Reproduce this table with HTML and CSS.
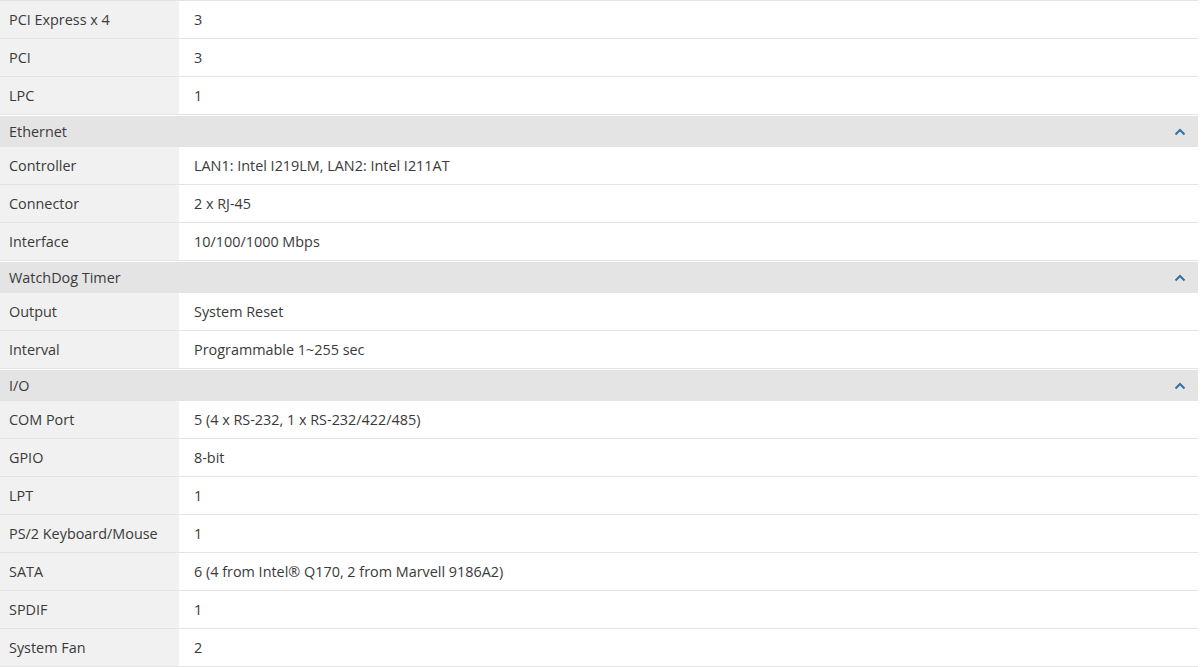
FILE: index.html
```html
<!DOCTYPE html>
<html>
<head>
<meta charset="utf-8">
<link rel="stylesheet" href="styles.css">
</head>
<body>
<div class="spec">
  <div class="row"><div class="label">PCI Express x 4</div><div class="value">3</div></div>
  <div class="row"><div class="label">PCI</div><div class="value">3</div></div>
  <div class="row"><div class="label">LPC</div><div class="value">1</div></div>

  <div class="group">
    <span>Ethernet</span>
    <svg class="chev" width="12" height="8" viewBox="0 0 12 8"><polyline points="1.5,6.5 6,2 10.5,6.5" fill="none" stroke="#3570a3" stroke-width="2"/></svg>
  </div>
  <div class="row"><div class="label">Controller</div><div class="value">LAN1: Intel I219LM, LAN2: Intel I211AT</div></div>
  <div class="row"><div class="label">Connector</div><div class="value">2 x RJ-45</div></div>
  <div class="row"><div class="label">Interface</div><div class="value">10/100/1000 Mbps</div></div>

  <div class="group">
    <span>WatchDog Timer</span>
    <svg class="chev" width="12" height="8" viewBox="0 0 12 8"><polyline points="1.5,6.5 6,2 10.5,6.5" fill="none" stroke="#3570a3" stroke-width="2"/></svg>
  </div>
  <div class="row"><div class="label">Output</div><div class="value">System Reset</div></div>
  <div class="row"><div class="label">Interval</div><div class="value">Programmable 1~255 sec</div></div>

  <div class="group">
    <span>I/O</span>
    <svg class="chev" width="12" height="8" viewBox="0 0 12 8"><polyline points="1.5,6.5 6,2 10.5,6.5" fill="none" stroke="#3570a3" stroke-width="2"/></svg>
  </div>
  <div class="row"><div class="label">COM Port</div><div class="value">5 (4 x RS-232, 1 x RS-232/422/485)</div></div>
  <div class="row"><div class="label">GPIO</div><div class="value">8-bit</div></div>
  <div class="row"><div class="label">LPT</div><div class="value">1</div></div>
  <div class="row"><div class="label">PS/2 Keyboard/Mouse</div><div class="value">1</div></div>
  <div class="row"><div class="label">SATA</div><div class="value">6 (4 from Intel® Q170, 2 from Marvell 9186A2)</div></div>
  <div class="row"><div class="label">SPDIF</div><div class="value">1</div></div>
  <div class="row"><div class="label">System Fan</div><div class="value">2</div></div>
</div>
</body>
</html>
```
FILE: styles.css
```css
html, body {
  margin: 0;
  padding: 0;
  background: #ffffff;
}
body {
  font-family: "Open Sans", "Liberation Sans", sans-serif;
  font-size: 14.4px;
  line-height: 18px;
  color: #3a3a3a;
}
.spec {
  width: 1198px;
  border-top: 1px solid #e4e4e4;
}
.row {
  display: flex;
  height: 37px;
  border-bottom: 1px solid #e4e4e4;
}
.label {
  width: 179px;
  flex: none;
  background: #f1f1f1;
  padding-left: 9px;
  box-sizing: border-box;
  display: flex;
  align-items: center;
}
.value {
  flex: 1;
  padding-left: 15px;
  display: flex;
  align-items: center;
  background: #ffffff;
}
.group {
  margin-top: 1px;
  height: 31px;
  background: #e4e4e4;
  display: flex;
  align-items: center;
  justify-content: space-between;
  padding: 0 12px 0 9px;
  box-sizing: border-box;
}
.chev {
  display: block;
}
```
